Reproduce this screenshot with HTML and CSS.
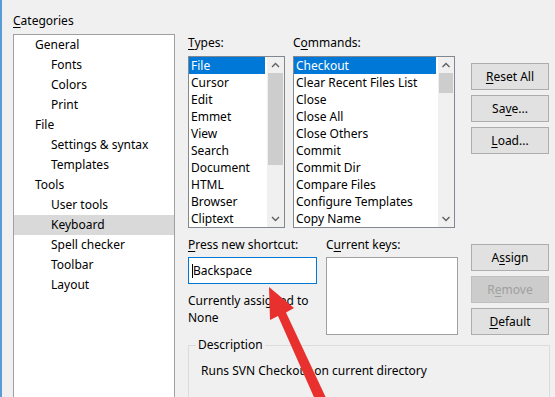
FILE: index.html
```html
<!DOCTYPE html>
<html lang="en">
  <head>
    <meta charset="UTF-8" />
    <title>Options - Keyboard</title>
    <link rel="stylesheet" href="styles.css">
  </head>
  <body>
    <div class="dialog">
      <div class="categories">
        <div class="label"><u>C</u>ategories</div>
        <ul class="tree">
          <li class="lvl1">General</li>
          <li class="lvl2">Fonts</li>
          <li class="lvl2">Colors</li>
          <li class="lvl2">Print</li>
          <li class="lvl1">File</li>
          <li class="lvl2">Settings &amp; syntax</li>
          <li class="lvl2">Templates</li>
          <li class="lvl1">Tools</li>
          <li class="lvl2">User tools</li>
          <li class="lvl2 current">Keyboard</li>
          <li class="lvl2">Spell checker</li>
          <li class="lvl2">Toolbar</li>
          <li class="lvl2">Layout</li>
        </ul>
      </div>

      <div class="main">
        <div class="row top-row">
          <div class="types">
            <div class="label"><u>T</u>ypes:</div>
            <div class="listbox">
              <ul class="items">
                <li class="selected">File</li>
                <li>Cursor</li>
                <li>Edit</li>
                <li>Emmet</li>
                <li>View</li>
                <li>Search</li>
                <li>Document</li>
                <li>HTML</li>
                <li>Browser</li>
                <li>Cliptext</li>
              </ul>
              <div class="scrollbar">
                <svg class="chev" width="17" height="16" viewBox="0 0 17 16"><path d="M5 10 L8.5 6.5 L12 10" fill="none" stroke="#606060" stroke-width="1.4"/></svg>
                <div class="track"><div class="thumb thumb-types"></div></div>
                <svg class="chev" width="17" height="16" viewBox="0 0 17 16"><path d="M5 6 L8.5 9.5 L12 6" fill="none" stroke="#606060" stroke-width="1.4"/></svg>
              </div>
            </div>
          </div>

          <div class="commands">
            <div class="label">C<u>o</u>mmands:</div>
            <div class="listbox">
              <ul class="items">
                <li class="selected">Checkout</li>
                <li>Clear Recent Files List</li>
                <li>Close</li>
                <li>Close All</li>
                <li>Close Others</li>
                <li>Commit</li>
                <li>Commit Dir</li>
                <li>Compare Files</li>
                <li>Configure Templates</li>
                <li>Copy Name</li>
              </ul>
              <div class="scrollbar">
                <svg class="chev" width="16" height="16" viewBox="0 0 16 16"><path d="M4.5 10 L8 6.5 L11.5 10" fill="none" stroke="#606060" stroke-width="1.4"/></svg>
                <div class="track"><div class="thumb thumb-commands"></div></div>
                <svg class="chev" width="16" height="16" viewBox="0 0 16 16"><path d="M4.5 6 L8 9.5 L11.5 6" fill="none" stroke="#606060" stroke-width="1.4"/></svg>
              </div>
            </div>
          </div>

          <div class="buttons buttons-top">
            <button class="btn"><u>R</u>eset All</button>
            <button class="btn">Sa<u>v</u>e...</button>
            <button class="btn"><u>L</u>oad...</button>
          </div>
        </div>

        <div class="row mid-row">
          <div class="shortcut">
            <div class="label"><u>P</u>ress new shortcut:</div>
            <div class="input"><span class="caret"></span>Backspace</div>
            <div class="assigned">Currently assigned to</div>
            <div class="assigned">None</div>
          </div>

          <div class="current-keys">
            <div class="label">C<u>u</u>rrent keys:</div>
            <div class="keys-box"></div>
          </div>

          <div class="buttons buttons-mid">
            <button class="btn">A<u>s</u>sign</button>
            <button class="btn" disabled>R<u>e</u>move</button>
            <button class="btn"><u>D</u>efault</button>
          </div>
        </div>

        <fieldset class="description">
          <legend>Description</legend>
          <p>Runs SVN Checkout on current directory</p>
        </fieldset>
      </div>
    </div>

    <!-- red annotation arrow drawn over the dialog -->
    <svg class="pointer" width="555" height="397" viewBox="0 0 555 397">
      <polygon points="269,287 294,308 286,312.5 327,400 317,404 278,316 270,320" fill="#e8312e"/>
    </svg>
  </body>
</html>
```

FILE: styles.css
```css
* {
  box-sizing: border-box;
}

html,
body {
  margin: 0;
  width: 555px;
  height: 397px;
  overflow: hidden;
}

body {
  position: relative;
  background: #f0f0f0;
  border-left: 2px solid #5b9bd5;
  font-family: "Noto Sans", "Open Sans", sans-serif;
  font-size: 12px;
  color: #000;
}

ul {
  list-style: none;
  margin: 0;
  padding: 0;
}

u {
  text-decoration-thickness: 1px;
  text-underline-offset: 2px;
}

.dialog {
  display: flex;
  padding: 13px 0 0 11px;
}

.label {
  line-height: 16px;
  height: 16px;
  margin-bottom: 4px;
  white-space: nowrap;
}

.categories .label {
  margin-bottom: 5px;
}

/* left tree */
.categories {
  width: 162px;
}

.tree {
  height: 363px;
  background: #fff;
  border: 1px solid #a0a0a0;
  border-bottom: 0;
}

.tree li {
  line-height: 20px;
  height: 20px;
  white-space: nowrap;
}

.lvl1 {
  padding-left: 21px;
}

.lvl2 {
  padding-left: 37px;
}

.tree .current {
  background: #d9d9d9;
}

/* right part */
.main {
  margin-left: 13px;
  padding-top: 22px;
}

.row {
  display: flex;
}

.top-row .label {
  margin-bottom: 5px;
}

.types {
  width: 97px;
}

.commands {
  width: 162px;
  margin-left: 8px;
}

.listbox {
  display: flex;
  height: 172px;
  background: #fff;
  border: 1px solid #828790;
}

.items {
  flex: 1;
  min-width: 0;
}

.items li {
  line-height: 17px;
  height: 17px;
  padding-left: 2px;
  white-space: nowrap;
  overflow: hidden;
}

.items .selected {
  background: #0078d7;
  color: #fff;
  margin-right: 2px;
}

.scrollbar {
  display: flex;
  flex-direction: column;
  background: #f0f0f0;
}

.chev {
  display: block;
  flex: none;
}

.track {
  flex: 1;
}

.thumb {
  background: #cdcdcd;
  margin: 0 1px;
}

.thumb-types {
  height: 92px;
}

.thumb-commands {
  height: 20px;
}

/* buttons */
.buttons {
  display: flex;
  flex-direction: column;
  gap: 5px;
}

.buttons-top {
  margin-left: 16px;
  padding-top: 28px;
}

.buttons-mid {
  margin-left: 13px;
  padding-top: 7px;
}

.btn {
  width: 78px;
  height: 27px;
  padding: 0;
  background: #e1e1e1;
  border: 1px solid #adadad;
  border-radius: 0;
  font-family: inherit;
  font-size: 12px;
  color: #000;
}

.btn:disabled {
  background: #cccccc;
  border-color: #bfbfbf;
  color: #a0a0a0;
}

/* shortcut row */
.mid-row {
  margin-top: 9px;
}

.shortcut {
  width: 129px;
}

.input {
  height: 27px;
  margin-bottom: 8px;
  padding-left: 3px;
  line-height: 25px;
  background: #fff;
  border: 1px solid #0078d7;
}

.caret {
  display: inline-block;
  width: 1px;
  height: 14px;
  background: #000;
  vertical-align: -3px;
}

.assigned {
  line-height: 17px;
  white-space: nowrap;
}

.current-keys {
  width: 132px;
  margin-left: 9px;
}

.keys-box {
  height: 78px;
  background: #fff;
  border: 1px solid #a0a0a0;
}

/* description group */
.description {
  width: 362px;
  height: 61px;
  margin: 2px 0 0;
  padding: 10px 12px 0;
  border: 1px solid #dcdcdc;
  border-bottom: 0;
  min-width: 0;
}

.description legend {
  margin-left: -5px;
  padding: 0 2px;
  line-height: 16px;
}

.description p {
  margin: 0;
  line-height: 16px;
  white-space: nowrap;
}

.pointer {
  position: absolute;
  left: -2px;
  top: 0;
  pointer-events: none;
}
```
